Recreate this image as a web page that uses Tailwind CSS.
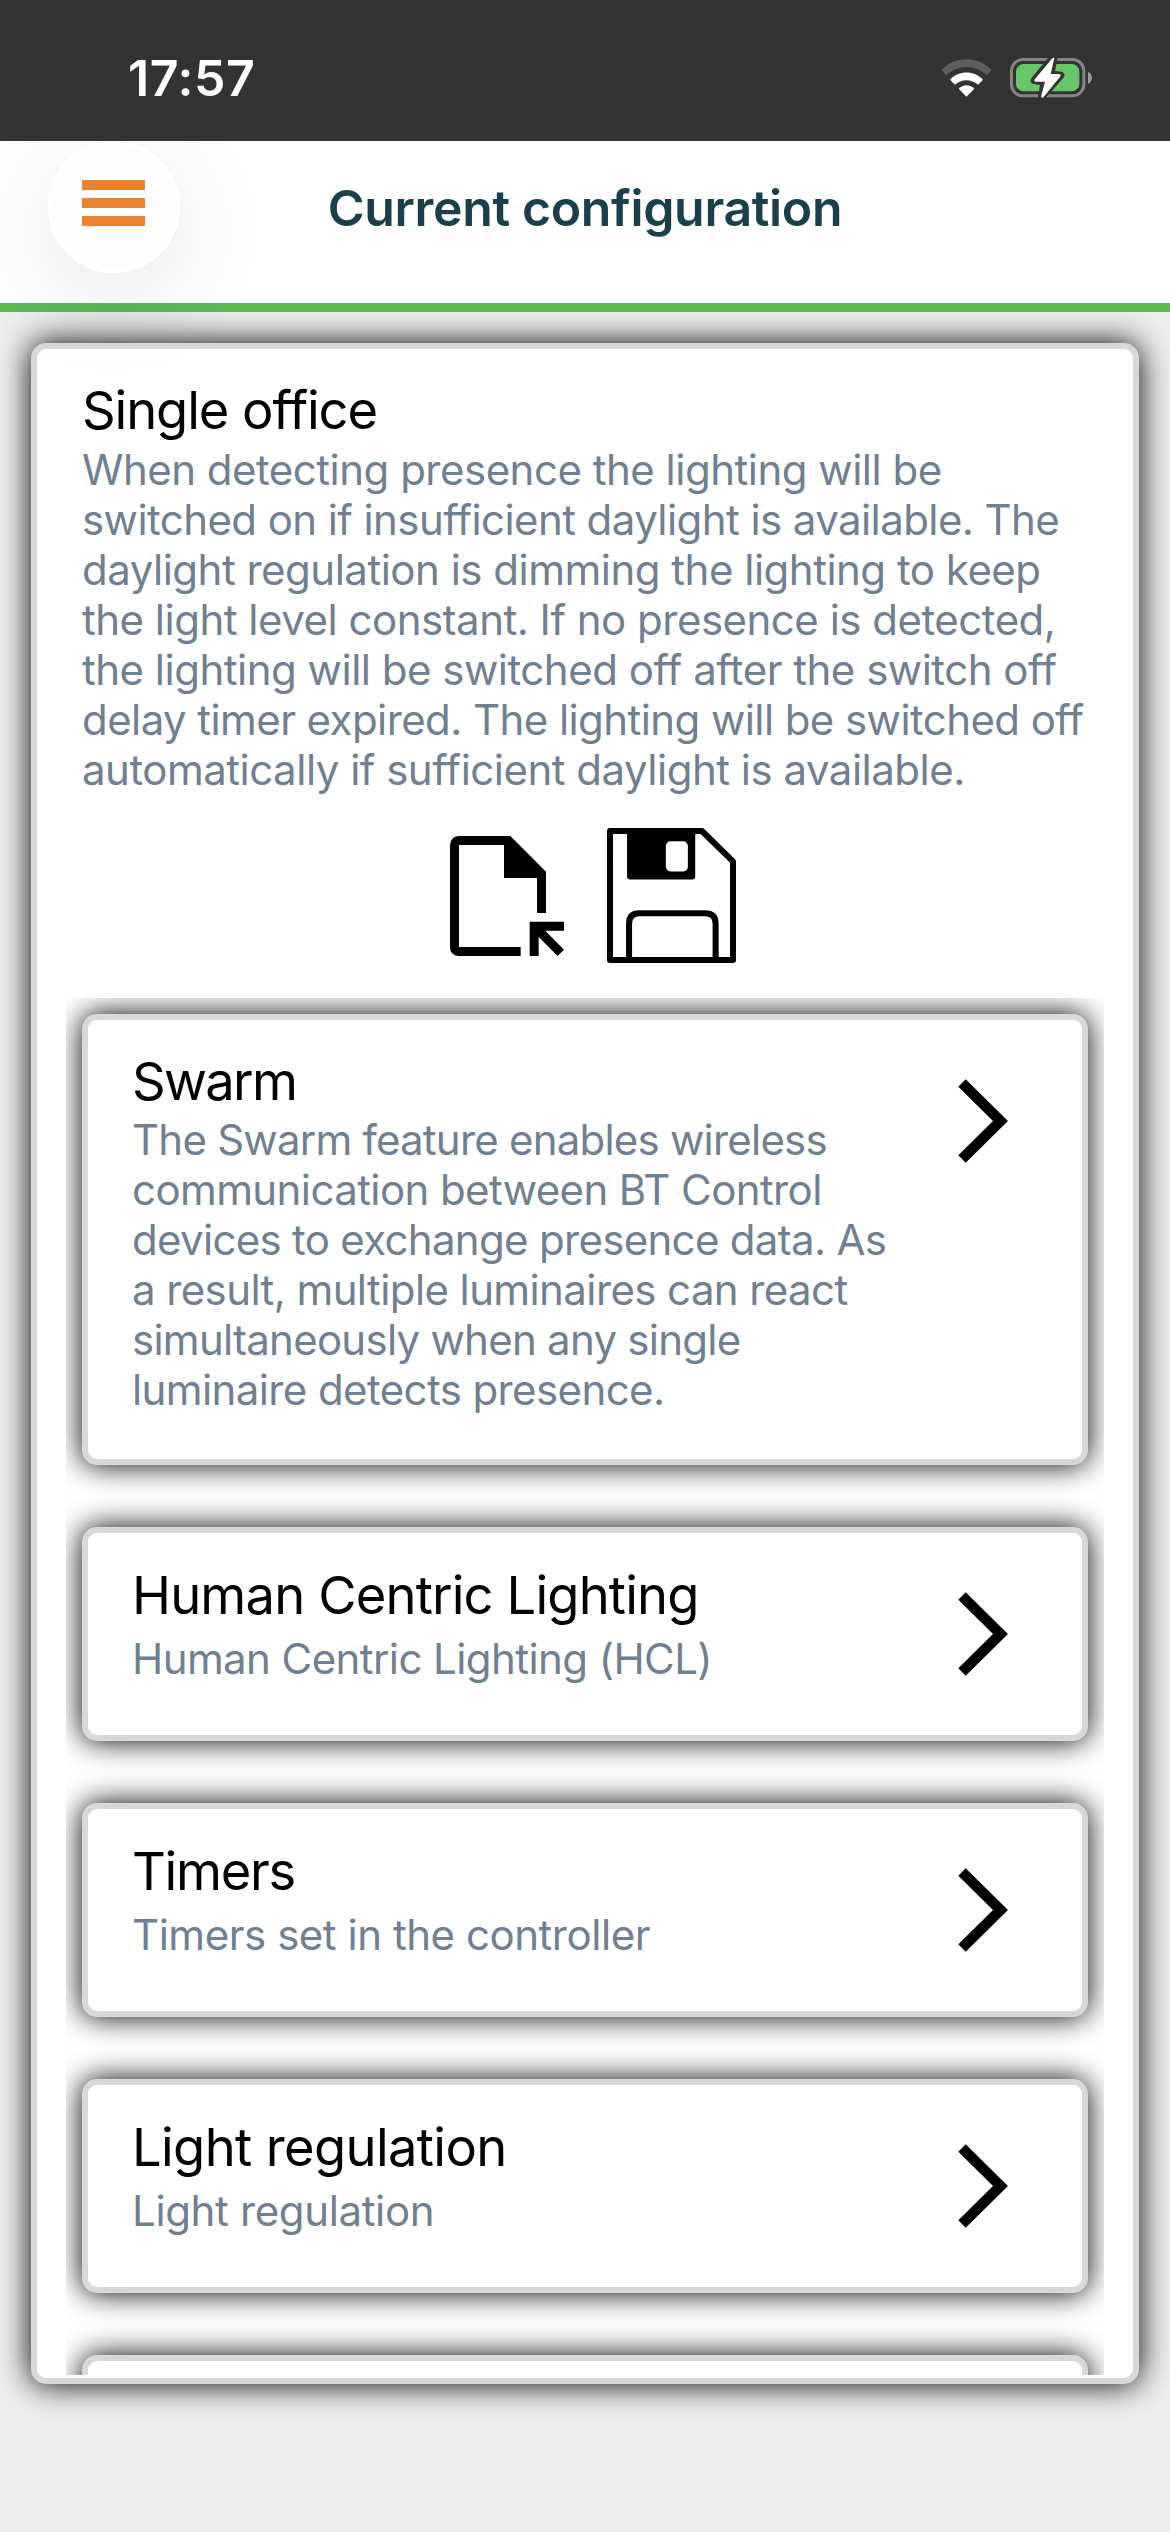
<!DOCTYPE html>
<html lang="en">
<head>
    <meta charset="UTF-8">
    <meta name="viewport" content="width=device-width, initial-scale=1.0">
    <title>Current configuration</title>
    <script src="https://cdn.jsdelivr.net/npm/@tailwindcss/browser@4"></script>
</head>
<body class="bg-[#ededed] font-['Inter','Liberation_Sans',sans-serif]">
    <div class="flex h-[2532px] w-[1170px] flex-col overflow-hidden">

        <!-- Status bar -->
        <div class="relative z-20 flex h-[141px] shrink-0 items-center justify-between bg-[#333333] pl-[128px] pr-[78px] pt-[15px]">
            <span class="text-[50px] font-semibold leading-[60px] tracking-[0.6px] text-white">17:57</span>
            <div class="flex items-center gap-[18px]">
                <svg class="h-[38px] w-[51px]" viewBox="0 0 153 114" fill="none">
                    <path d="M1 34 C40 -10 112 -10 152 34 L137 49 C104 16 49 16 16 49 Z" fill="#5e5e5e"/>
                    <path d="M27 62 C54 33 99 33 126 62 L111 77 C92 59 61 59 42 77 Z" fill="#fff"/>
                    <path d="M53 89 C66 75 87 75 100 89 L76.500 113 Z" fill="#fff"/>
                </svg>
                <svg class="h-[42px] w-[82px]" viewBox="0 0 246 126">
                    <rect x="4.500" y="7.500" width="217" height="109" rx="34" fill="none" stroke="#858585" stroke-width="9"/>
                    <rect x="18" y="21" width="190" height="82" rx="23" fill="#67c667"/>
                    <path d="M234 44 Q246 50 246 62 Q246 74 234 80 Z" fill="#9b9b9b"/>
                    <path d="M127 4 L73 70 L103 75 L95 120 L152 55 L122 51 L131 6 Z" fill="#fff" stroke="#333" stroke-width="22" stroke-linejoin="round"/>
                    <path d="M127 4 L73 68 Q72 74 78 74 L105 74 L93 119 Q96 124 101 120 L152 57 Q153 51 147 51 L122 51 L133 4 Q131 0 127 4 Z" fill="#fff"/>
                </svg>
            </div>
        </div>

        <!-- Header -->
        <div class="relative z-10 flex h-[171px] shrink-0 justify-center border-b-[9px] border-[#5aba54] bg-white">
            <button class="absolute left-[48px] top-0 flex size-[132px] flex-col items-center gap-[8px] rounded-full border-[3px] border-white bg-[#fdfdfd] pr-[1px] pt-[36px] shadow-[0_24px_100px_rgba(0,0,0,0.11)]">
                <span class="h-[10px] w-[63px] bg-[#ea832f]"></span>
                <span class="h-[10px] w-[63px] bg-[#ea832f]"></span>
                <span class="h-[10px] w-[63px] bg-[#ea832f]"></span>
            </button>
            <h1 class="mt-[37px] text-[50px] font-[560] leading-[60px] tracking-[-0.35px] text-[#19404b]">Current configuration</h1>
        </div>

        <!-- Configuration card -->
        <main class="mx-[31px] mt-[31px] flex h-[2041px] flex-col rounded-[15px] border-[6px] border-[#d8d8d8] bg-white pb-[3px] shadow-[0_0_32px_#000]">
            <div class="flex h-[649px] shrink-0 flex-col pl-[45px] pt-[29px]">
                <h2 class="text-[52.500px] leading-[64px] tracking-[-1.1px]">Single office</h2>
                <p class="mt-[3px] whitespace-nowrap text-[42px] leading-[50px] tracking-[-0.5px] text-[#708090]">
                    When detecting presence the lighting will be<br>
                    <span class="tracking-[-0.58px]">switched on if insufficient daylight is available. The</span><br>
                    daylight regulation is dimming the lighting to keep<br>
                    the light level constant. If no presence is detected,<br>
                    the lighting will be switched off after the switch off<br>
                    <span class="tracking-[-0.58px]">delay timer expired. The lighting will be switched off</span><br>
                    automatically if sufficient daylight is available.
                </p>
                <div class="mt-[33px] flex items-start gap-[43px] pl-[368px]">
                    <svg class="mt-[8px] h-[120px] w-[114px]" viewBox="0 0 342 360">
                        <path d="M26 0 H181 L288 107 V231 H261 V126 H162 V27 H27 V333 H212 V360 H26 Q0 358 0 333 V27 Q2 2 26 0 Z"/>
                        <path d="M239 257 H342 V284 H286 L342 341 L323 360 L266 303 V360 H239 Z"/>
                    </svg>
                    <svg class="h-[135px] w-[129px]" viewBox="0 0 386 404" fill="none" stroke="#000" stroke-width="18" stroke-linejoin="round">
                        <path d="M9 9 H284 L377 100 V395 H9 Z"/>
                        <path d="M69 9 V145 H255 V9 Z" fill="#000"/>
                        <rect x="176" y="40" width="66" height="90" rx="14" fill="#fff" stroke="none"/>
                        <path d="M66 395 V286 Q66 255 97 255 H294 Q325 255 325 286 V395"/>
                    </svg>
                </div>
            </div>

            <!-- Features -->
            <div class="mx-[29px] flex flex-1 flex-col gap-[62px] overflow-hidden px-[16px] pt-[16px]">
                <section class="flex h-[451px] shrink-0 justify-between rounded-[15px] border-[6px] border-[#d8d8d8] bg-white pl-[44px] pr-[74px] pt-[29px] shadow-[0_0_30px_#000]">
                    <div>
                        <h2 class="text-[52.500px] leading-[64px] tracking-[-1.7px]">Swarm</h2>
                        <p class="mt-[2px] whitespace-nowrap text-[42px] leading-[50px] tracking-[-0.6px] text-[#708090]">
                            <span class="tracking-[-0.78px]">The Swarm feature enables wireless</span><br>
                            communication between BT Control<br>
                            <span class="tracking-[-0.69px]">devices to exchange presence data. As</span><br>
                            a result, multiple luminaires can react<br>
                            <span class="tracking-[-0.74px]">simultaneously when any single</span><br>
                            luminaire detects presence.
                        </p>
                    </div>
                    <svg class="mt-[30px] h-[84px] w-[50px]" viewBox="0 0 50 84" fill="none" stroke="#000" stroke-width="10.500"><path d="M4 4 L42.500 42 L4 80"/></svg>
                </section>
                <section class="flex h-[214px] shrink-0 justify-between rounded-[15px] border-[6px] border-[#d8d8d8] bg-white pl-[44px] pr-[74px] pt-[30px] shadow-[0_0_30px_#000]">
                    <div>
                        <h2 class="text-[52.500px] leading-[64px] tracking-[-0.85px]">Human Centric Lighting</h2>
                        <p class="mt-[7px] text-[42px] leading-[50px] tracking-[-0.58px] text-[#708090]">Human Centric Lighting (HCL)</p>
                    </div>
                    <svg class="mt-[29px] h-[84px] w-[50px]" viewBox="0 0 50 84" fill="none" stroke="#000" stroke-width="10.500"><path d="M4 4 L42.500 42 L4 80"/></svg>
                </section>
                <section class="flex h-[214px] shrink-0 justify-between rounded-[15px] border-[6px] border-[#d8d8d8] bg-white pl-[44px] pr-[74px] pt-[30px] shadow-[0_0_30px_#000]">
                    <div>
                        <h2 class="text-[52.500px] leading-[64px] tracking-[-1.3px]">Timers</h2>
                        <p class="mt-[7px] text-[42px] leading-[50px] tracking-[-0.46px] text-[#708090]">Timers set in the controller</p>
                    </div>
                    <svg class="mt-[29px] h-[84px] w-[50px]" viewBox="0 0 50 84" fill="none" stroke="#000" stroke-width="10.500"><path d="M4 4 L42.500 42 L4 80"/></svg>
                </section>
                <section class="flex h-[214px] shrink-0 justify-between rounded-[15px] border-[6px] border-[#d8d8d8] bg-white pl-[44px] pr-[74px] pt-[30px] shadow-[0_0_30px_#000]">
                    <div>
                        <h2 class="text-[52.500px] leading-[64px] tracking-[-0.64px]">Light regulation</h2>
                        <p class="mt-[7px] text-[42px] leading-[50px] tracking-[-0.36px] text-[#708090]">Light regulation</p>
                    </div>
                    <svg class="mt-[29px] h-[84px] w-[50px]" viewBox="0 0 50 84" fill="none" stroke="#000" stroke-width="10.500"><path d="M4 4 L42.500 42 L4 80"/></svg>
                </section>
                <section class="h-[214px] shrink-0 rounded-[15px] border-[6px] border-[#d8d8d8] bg-white shadow-[0_0_30px_#000]"></section>
            </div>
        </main>
    </div>
</body>
</html>
